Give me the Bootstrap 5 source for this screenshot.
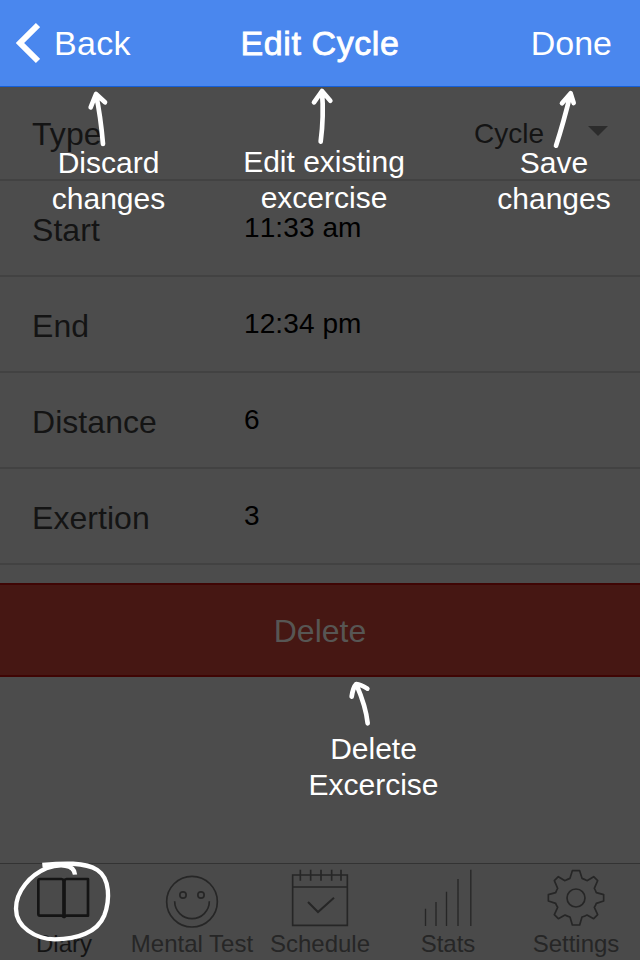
<!DOCTYPE html>
<html lang="en">
<head>
<meta charset="utf-8">
<meta name="viewport" content="width=device-width, initial-scale=1">
<title>Edit Cycle</title>
<link href="https://cdn.jsdelivr.net/npm/bootstrap@5.3.0/dist/css/bootstrap.min.css" rel="stylesheet">
<style>
body{font-family:"Liberation Sans",Arial,sans-serif;background:#4c4c4c;color:#141414;width:640px;height:960px;overflow:hidden}
.topbar{height:87px;background:#4a87ee;border-bottom:1px solid #145fd7;font-size:34px;line-height:40px;color:#fff;padding:0 28px 0 16px}
.page-title{font-size:34px;line-height:40px;letter-spacing:.6px;-webkit-text-stroke:.8px #fff}
.side{width:150px}
.side-left{width:162px}
.back-text{padding-left:14px;letter-spacing:.3px}
.field{height:96px;border-bottom:2px solid #424242;padding:25px 32px 0 31px}
.field:first-child{height:94px;padding-top:23px}
.field-name{width:213px;padding-left:1px;font-size:32px;line-height:48px;letter-spacing:.05px}
.field-value{font-size:28px;line-height:48px;color:#000;margin-top:-2px;letter-spacing:.1px;font-kerning:none}
.field:first-child .field-value{color:#141414;margin-top:0;letter-spacing:0}
.caret{width:20px;height:10px;margin:16px 0 0 44px;background:#2c2c2c;clip-path:polygon(0 0,100% 0,50% 100%)}
.btn-delete{height:94px;margin-top:18px;background:#461713;border:2px solid #3f0504;border-width:2px 0;color:#575654;font-size:32px;line-height:48px;padding:2px 0 0}
.tabs{height:97px;border-top:1px solid #333;background:#4a4a4a;color:#262626;font-size:24px;line-height:24px}
.tabs svg{width:128px;height:68px;display:block;fill:none;stroke:#262626;stroke-width:5}
.tabs a{width:128px;white-space:nowrap}
.tabs .current,.tabs .current svg{color:#141414;stroke:#141414}
.hint{font-size:30px;line-height:36px;color:#fff;white-space:nowrap;transform:translateX(-50%)}
.hint-back{left:108.5px;top:145px}
.hint-title{left:324px;top:144px}
.hint-done{left:554px;top:145px}
.hint-delete{left:373.5px;top:731px}
.strokes{fill:none;stroke:#fff;stroke-width:14;stroke-linecap:round;stroke-linejoin:round;pointer-events:none}
</style>
</head>
<body class="d-flex flex-column position-relative">
<header class="topbar d-flex align-items-center justify-content-between flex-shrink-0">
  <a class="side side-left d-flex align-items-center text-reset text-decoration-none">
    <svg width="24" height="42" viewBox="48 66 72 126" fill="none" stroke="#fff" stroke-width="18"><path d="M114 75 60 129 114 183"/></svg>
    <span class="back-text">Back</span>
  </a>
  <h1 class="page-title m-0 fw-normal">Edit Cycle</h1>
  <a class="side text-end text-reset text-decoration-none">Done</a>
</header>
<main class="flex-grow-1">
  <div>
    <div class="field d-flex"><div class="field-name">Type</div><div class="field-value ms-auto">Cycle</div><div class="caret"></div></div>
    <div class="field d-flex"><div class="field-name">Start</div><div class="field-value">11:33 am</div></div>
    <div class="field d-flex"><div class="field-name">End</div><div class="field-value">12:34 pm</div></div>
    <div class="field d-flex"><div class="field-name">Distance</div><div class="field-value">6</div></div>
    <div class="field d-flex"><div class="field-name">Exertion</div><div class="field-value">3</div></div>
  </div>
  <button class="btn btn-delete w-100 rounded-0">Delete</button>
</main>
<nav class="tabs d-flex flex-shrink-0 text-center">
  <a class="current text-decoration-none">
    <svg viewBox="0 27 384 204"><path stroke-width="8" stroke-linejoin="round" d="M192 77Q190 72 184 72H120Q115 72 115 77V177Q115 182 120 182H184Q190 182 192 186Q194 182 200 182H264V72H200Q194 72 192 77"/><path stroke-width="11" d="M192 73V188"/></svg>Diary</a>
  <a class="text-reset text-decoration-none">
    <svg viewBox="0 27 384 204"><circle cx="192" cy="140" r="76"/><circle cx="165" cy="120" r="9.5"/><circle cx="219" cy="120" r="9.5"/><path d="M140 139A52 52 0 0 0 244 139"/></svg>Mental Test</a>
  <a class="text-reset text-decoration-none">
    <svg viewBox="0 27 384 204"><path d="M110 60H274V211H110ZM110 96H274M133 44V77M164 44V77M195 44V77M227 44V77M255 44V77"/><path stroke-width="6" d="M156 141 186 171 234 128"/></svg>Schedule</a>
  <a class="text-reset text-decoration-none">
    <svg viewBox="0 27 384 204"><path stroke-width="4" d="M124.500 161V213M156 141V213M187.500 110V213M222 72V213M260.500 44V213"/></svg>Stats</a>
  <a class="text-reset text-decoration-none">
    <svg viewBox="0 27 384 204"><path stroke-linejoin="round" d="M181 47H203L210 70Q217 72 225 77L245 65 257 77 247 100Q250 105 253 113L275 119V138L253 145Q250 153 247 157L257 179 245 191 225 180Q217 184 210 186L203 210H181L174 186Q166 184 159 180L139 191 127 179 137 157Q134 153 131 145L109 138V119L131 113Q134 105 137 100L127 77 139 65 159 77Q167 72 174 70Z"/><circle cx="192" cy="129" r="27"/></svg>Settings</a>
</nav>

<!-- Help overlay: hand-drawn marks and captions -->
<svg class="strokes position-absolute top-0 start-0" width="640" height="960" viewBox="0 0 1920 2880">
  <path d="M309 432Q302 350 288 283M272 322 288 282 315 307"/>
  <path d="M962 425Q972 350 966 273M942 307 966 273 991 302"/>
  <path d="M1668 437Q1690 370 1712 280M1686 310 1712 280 1721 309"/>
  <path d="M1103 2170Q1098 2120 1069 2053M1055 2090Q1059 2062 1069 2052 1082 2053 1102 2066"/>
  <path stroke-width="13" stroke-linecap="butt" d="M127 2595C190 2589 255 2586 292 2610C331 2636 330 2700 313 2746C292 2798 230 2818 165 2818C105 2817 48 2780 48 2726C48 2672 92 2625 139 2605C178 2591 223 2592 225 2624"/>
</svg>
<div class="hint hint-back position-absolute text-center">Discard<br>changes</div>
<div class="hint hint-title position-absolute text-center">Edit existing<br>excercise</div>
<div class="hint hint-done position-absolute text-center">Save<br>changes</div>
<div class="hint hint-delete position-absolute text-center">Delete<br>Excercise</div>
<script src="https://cdn.jsdelivr.net/npm/bootstrap@5.3.0/dist/js/bootstrap.bundle.min.js"></script>
</body>
</html>
